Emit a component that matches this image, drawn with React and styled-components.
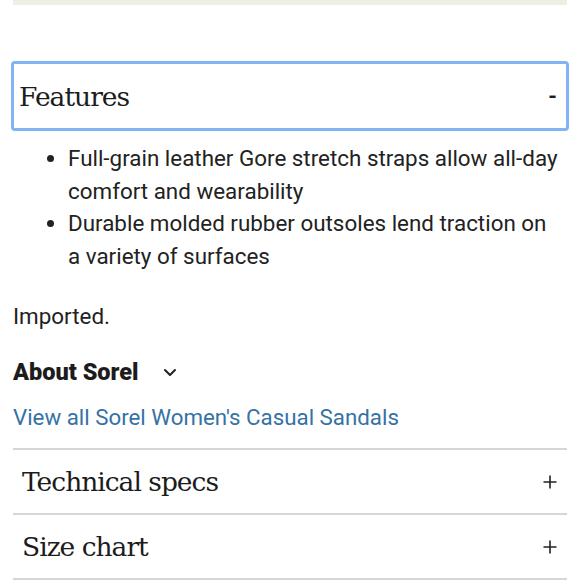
import styled, {createGlobalStyle} from "styled-components";

const GlobalStyle = createGlobalStyle`
	body {
		margin: 0;
		background: #fff;
		font-family: Roboto, "Liberation Sans", sans-serif;
		color: #222;
	}
`;

const serif = `"DejaVu Serif", "Liberation Serif", serif`;

const Page = styled.div`
	width: 580px;
	height: 580px;
	overflow: hidden;
`;

const TopBar = styled.div`
	height: 5px;
	margin: 0 13px;
	background: #eeeee5;
`;

const FeaturesHeader = styled.button`
	display: flex;
	align-items: center;
	justify-content: space-between;
	box-sizing: border-box;
	width: 558px;
	height: 70px;
	margin: 56px 0 0 11px;
	padding: 0 9px 0 5px;
	border: 3px solid #80b4f2;
	border-radius: 4px;
	background: #fff;
	font-family: ${serif};
	font-size: 26.5px;
	letter-spacing: -1px;
	color: #1c1c1c;
	cursor: pointer;
`;

const Dash = styled.span`
	font-family: Roboto, sans-serif;
	font-size: 22px;
	font-weight: 700;
	letter-spacing: 0;
`;

const Content = styled.div`
	padding: 0 13px;
`;

const BulletList = styled.ul`
	margin: 11px 0 0;
	padding: 0 6px 0 55px;
	font-size: 22.4px;
	line-height: 32.5px;
`;

const Paragraph = styled.p`
	margin: 28px 0 0;
	font-size: 22.4px;
	line-height: 32px;
`;

const AboutToggle = styled.div`
	display: flex;
	align-items: center;
	gap: 24px;
	margin-top: 24px;
	font-size: 23.5px;
	font-weight: 900;
	line-height: 32px;
	color: #1c1c1c;
`;

const BrandLink = styled.a`
	display: block;
	margin-top: 13px;
	font-size: 22.3px;
	line-height: 32px;
	color: #3572a5;
	text-decoration: none;
`;

const Sections = styled.div`
	margin-top: 15px;
	border-top: 2px solid #d6d6d6;
`;

const SectionRow = styled.div`
	display: flex;
	align-items: center;
	justify-content: space-between;
	height: 63px;
	padding: 0 10px 0 9px;
	border-bottom: 2px solid #d6d6d6;
	font-family: ${serif};
	font-size: 26.5px;
	letter-spacing: -1px;
	color: #1c1c1c;
`;

const Chevron = () => (
	<svg width="14" height="9" viewBox="0 0 14 9" fill="none">
		<path d="M2 2l5 5 5-5" stroke="#222" strokeWidth="2" strokeLinecap="round" strokeLinejoin="round" />
	</svg>
);

const Plus = () => (
	<svg width="14" height="14" viewBox="0 0 14 14" fill="none">
		<path d="M7 0.5v13M0.5 7h13" stroke="#222" strokeWidth="1.6" />
	</svg>
);

const features = [
	"Full-grain leather Gore stretch straps allow all-day comfort and wearability",
	"Durable molded rubber outsoles lend traction on a variety of surfaces",
];

const sections = ["Technical specs", "Size chart"];

const App = () => {
	return (
		<>
			<GlobalStyle />
			<Page>
				<TopBar />
				<FeaturesHeader>
					Features
					<Dash>-</Dash>
				</FeaturesHeader>
				<Content>
					<BulletList>
						{features.map((f) => (
							<li key={f}>{f}</li>
						))}
					</BulletList>
					<Paragraph>Imported.</Paragraph>
					<AboutToggle>
						About Sorel
						<Chevron />
					</AboutToggle>
					<BrandLink href="#">View all Sorel Women's Casual Sandals</BrandLink>
					<Sections>
						{sections.map((s) => (
							<SectionRow key={s}>
								{s}
								<Plus />
							</SectionRow>
						))}
					</Sections>
				</Content>
			</Page>
		</>
	);
};

export default App;
